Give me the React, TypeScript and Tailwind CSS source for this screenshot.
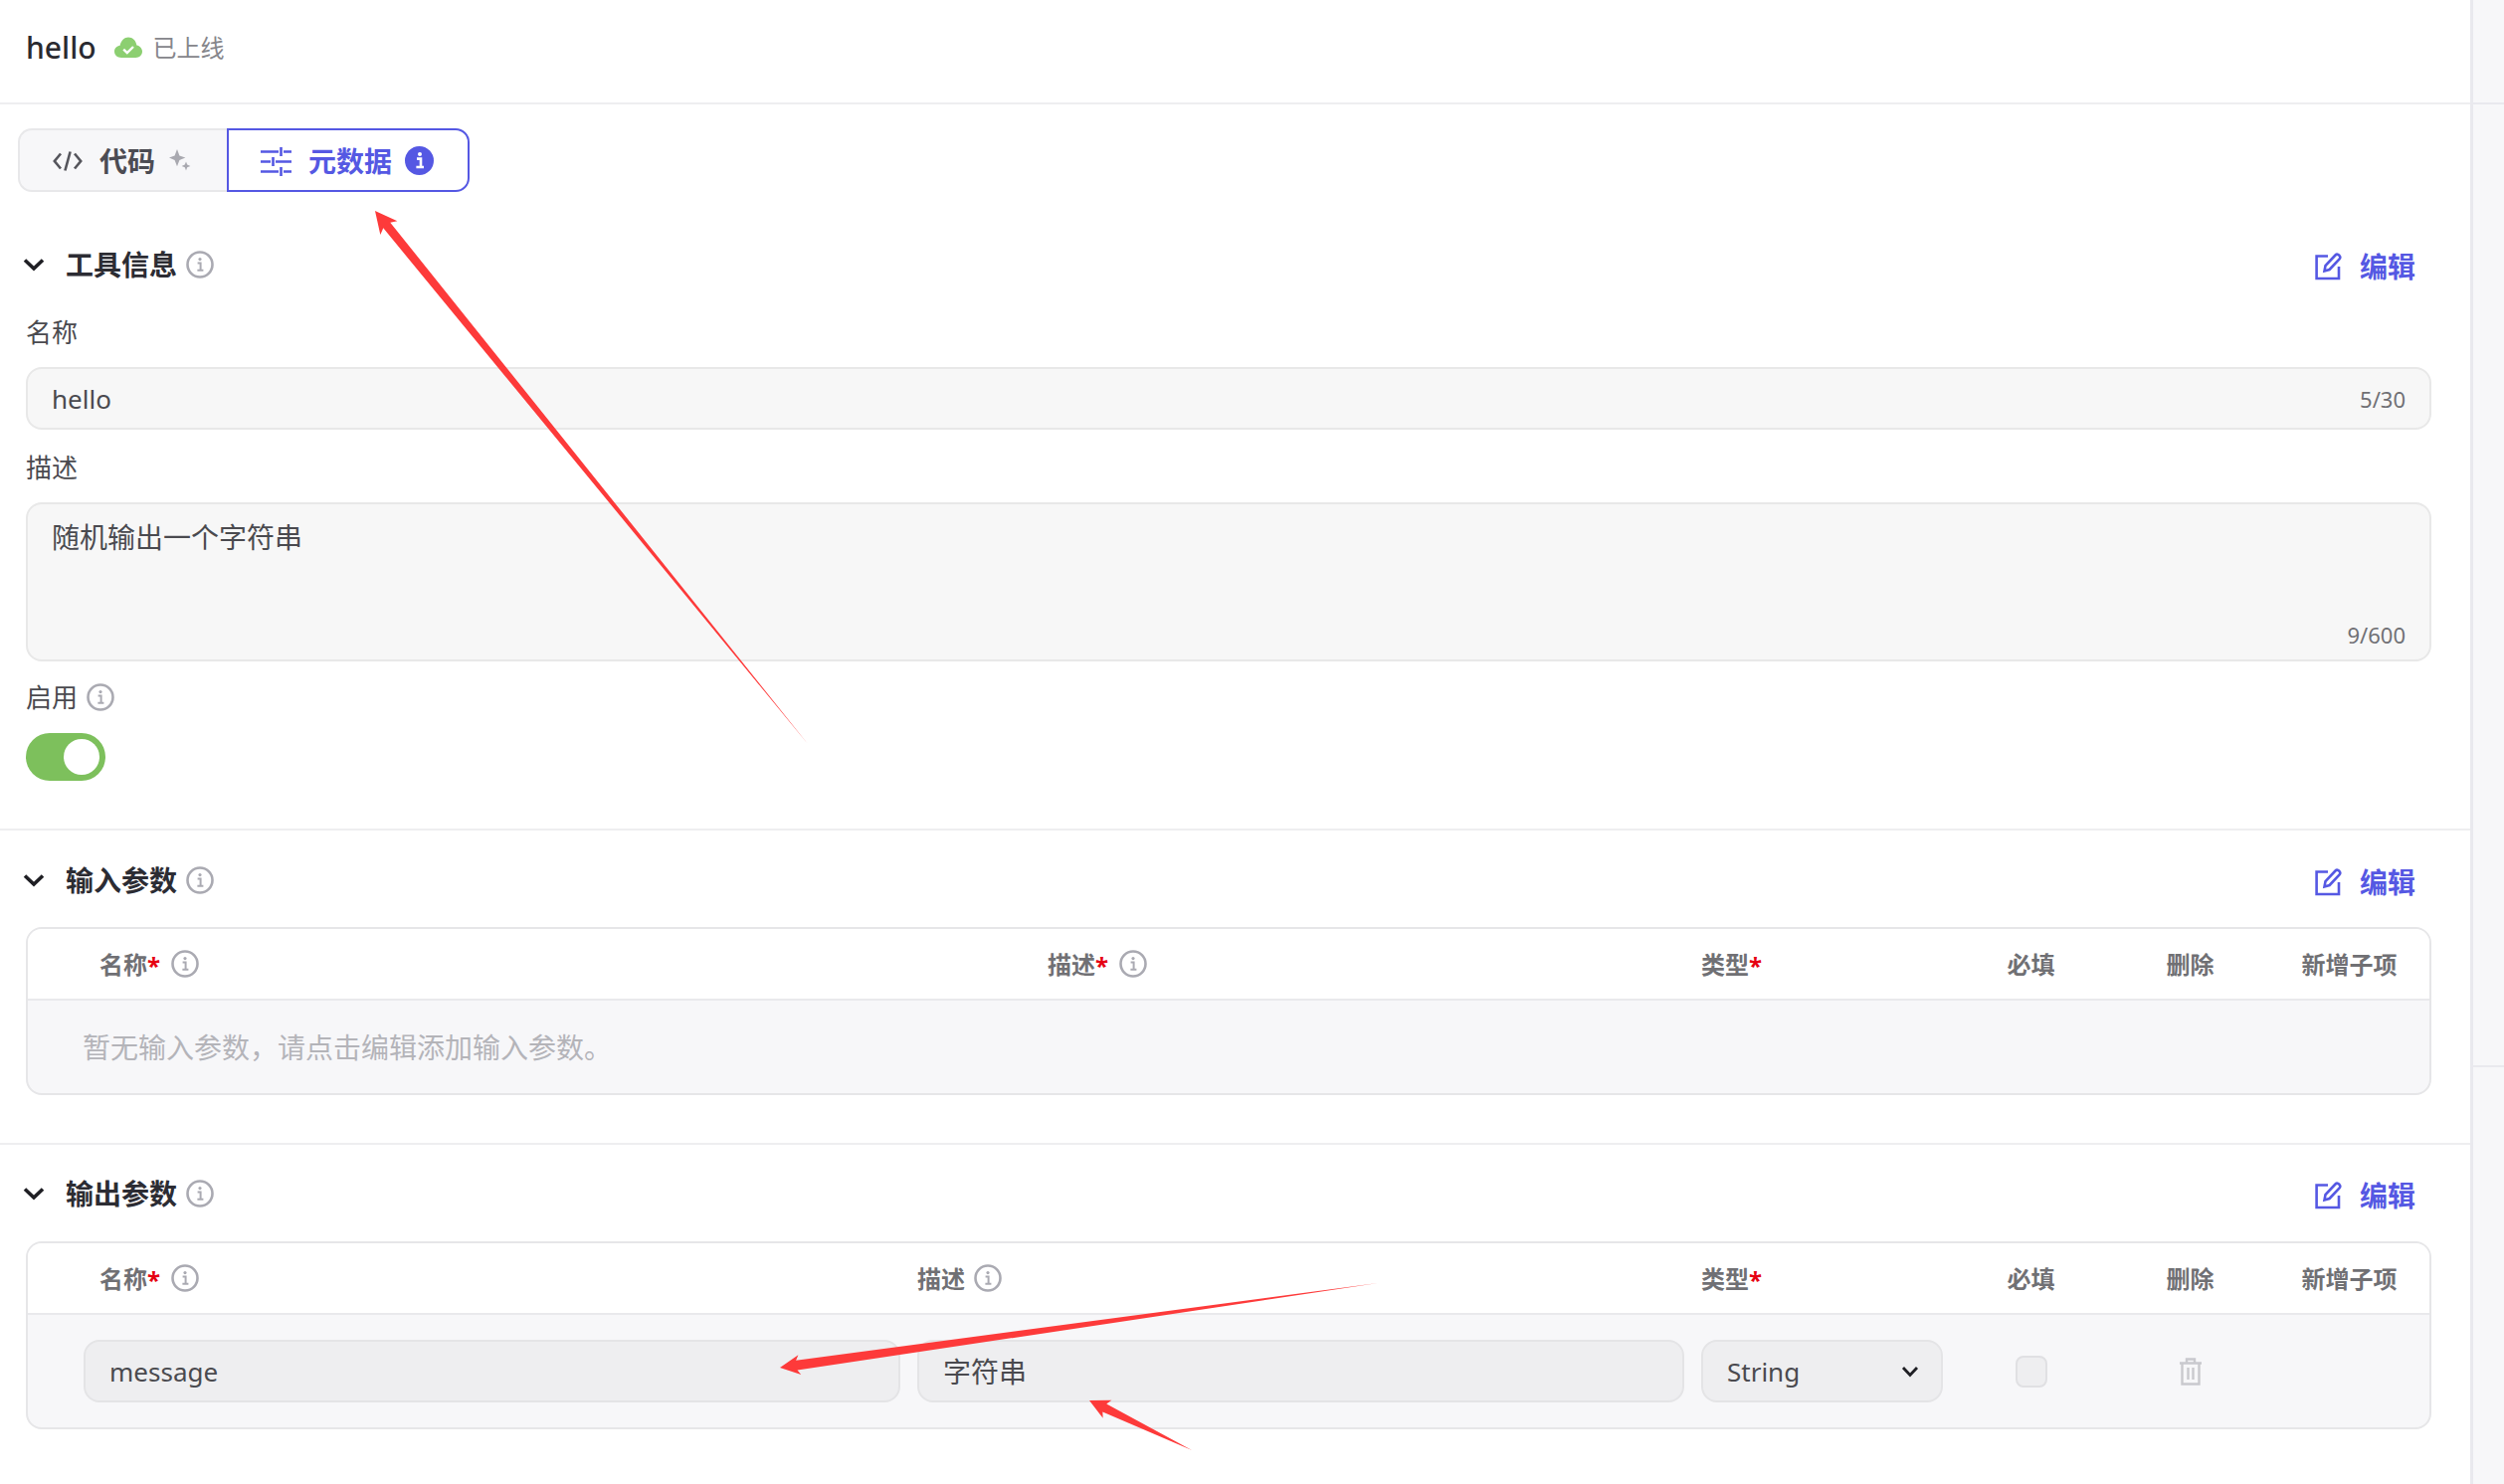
import React from 'react'

const GRID_INPUT = 'grid-cols-[952px_640px_243px_143px_143px_143px]'
const GRID_OUTPUT = 'grid-cols-[821px_771px_243px_143px_143px_143px]'

const InfoIcon = ({ className = 'w-[28px] h-[28px]' }: { className?: string }) => (
  <svg viewBox="0 0 28 28" className={className} fill="none">
    <circle cx="14" cy="14" r="12.5" stroke="#aaaab2" strokeWidth="2.6" />
    <circle cx="14" cy="8.6" r="1.6" fill="#aaaab2" />
    <path d="M11.6 12.4H14.6V19.4M11.4 19.8H17.4" stroke="#aaaab2" strokeWidth="2" />
  </svg>
)

const Chevron = () => (
  <svg viewBox="0 0 22 14" className="w-[22px] h-[14px]" fill="none">
    <path d="M2 2.5L11 11L20 2.5" stroke="#1f1f24" strokeWidth="3.6" />
  </svg>
)

const EditIcon = () => (
  <svg viewBox="0 0 27 28" className="w-[27px] h-[28px]" fill="none" stroke="#5558e3" strokeWidth="2.6">
    <path d="M13 3.5H1.6V26H24V14" />
    <path d="M9.5 18.5L10.5 13L20.5 2.5C21.5 1.5 23 1.5 24.4 2.8C25.6 4 25.6 5.4 24.6 6.4L14.6 17Z" />
  </svg>
)

const SectionHeader = ({ title }: { title: string }) => (
  <div className="h-[56px] pl-[23px] pr-[55px] flex items-center">
    <Chevron />
    <span className="ml-[21px] text-[28px] font-bold text-[#2c2c33]">{title}</span>
    <span className="ml-[9px] flex"><InfoIcon /></span>
    <div className="ml-auto mt-[3px] flex items-center gap-[18px]">
      <EditIcon />
      <span className="text-[28px] font-bold text-[#5558e3]">编辑</span>
    </div>
  </div>
)

const FieldLabel = ({ children }: { children: React.ReactNode }) => (
  <div className="h-[40px] pl-[26px] flex items-center gap-[9px] text-[26px] text-[#4a4a4f]">{children}</div>
)

const HeadCell = ({ label, required, info, className = '' }: { label: string; required?: boolean; info?: boolean; className?: string }) => (
  <div className={`flex items-center pt-[2px] text-[24px] font-bold text-[#707074] ${className}`}>
    <span>{label}</span>
    {required && <span className="text-[#e60012] self-start mt-[23px] mr-[2px] leading-[24px]">*</span>}
    {info && <span className="ml-[9px] -mt-[2px] flex"><InfoIcon /></span>}
  </div>
)

const TableHead = ({ grid, descRequired }: { grid: string; descRequired?: boolean }) => (
  <div className={`grid ${grid} gap-x-[17px] h-[72px] pl-[56px] border-b-2 border-[#e9e9ec] bg-white`}>
    <HeadCell label="名称" required info className="pl-[16px]" />
    <HeadCell label="描述" required={descRequired} info />
    <HeadCell label="类型" required />
    <HeadCell label="必填" className="justify-center" />
    <HeadCell label="删除" className="justify-center" />
    <HeadCell label="新增子项" className="justify-center whitespace-nowrap" />
  </div>
)

const Arrow = ({ tip, tail, width, head }: { tip: number[]; tail: number[]; width: number; head: number }) => {
  const dx = tail[0] - tip[0]
  const dy = tail[1] - tip[1]
  const len = Math.hypot(dx, dy)
  const ux = dx / len
  const uy = dy / len
  const at = (along: number, side: number) => `${tip[0] + ux * along - uy * side},${tip[1] + uy * along + ux * side}`
  const points = [
    at(0, 0),
    at(head, head * 0.5),
    at(head * 0.85, width / 2),
    `${tail[0]},${tail[1]}`,
    at(head * 0.85, -width / 2),
    at(head, -head * 0.5),
  ].join(' ')
  return <polygon points={points} fill="#fd3a3a" />
}

export default function App() {
  return (
    <div className="relative w-[2517px] h-[1492px] overflow-hidden flex bg-white font-['Noto_Sans','Noto_Sans_CJK_SC',sans-serif]">
      <main className="w-[2486px] shrink-0 border-r-[3px] border-[#e9e9ee]">
        <header className="h-[105px] border-b-2 border-[#eeeef0] pl-[26px] flex items-center gap-[18px] pb-[8px]">
          <span className="text-[30px] font-medium text-[#2a2a30]">hello</span>
          <div className="flex items-center gap-[11px]">
            <svg viewBox="0 0 28 24" className="w-[28px] h-[24px]">
              <path d="M7 22C3 22 0 19.3 0 15.8C0 12.6 2.4 10.2 5.6 9.8C6.6 4.6 10 1.4 14 1.4C18.4 1.4 21.6 4.4 22.4 9.4C25.6 10 28 12.6 28 15.8C28 19.4 25 22 21.4 22Z" fill="#8ccf71" />
              <path d="M9.2 13.6L12.8 17L19 11" fill="none" stroke="#fff" strokeWidth="2.4" />
            </svg>
            <span className="text-[24px] text-[#86868b]">已上线</span>
          </div>
        </header>

        <div className="mt-[24px] ml-[18px] flex h-[64px] w-[454px]">
          <div className="w-[210px] rounded-l-[14px] border-2 border-r-0 border-[#e8e8ea] bg-[#f7f7f9] flex items-center pl-[33px]">
            <svg viewBox="0 0 30 22" className="w-[30px] h-[22px] mt-[2px]" fill="none" stroke="#55555c" strokeWidth="2.6">
              <path d="M8 3.5L1.8 11L8 18.5M22 3.5L28.2 11L22 18.5M17.6 1.5L12.4 20.5" />
            </svg>
            <span className="ml-[17px] mt-[2px] text-[28px] font-bold text-[#4c4c53]">代码</span>
            <svg viewBox="0 0 22 22" className="ml-[14px] w-[22px] h-[22px]" fill="#a9a9b0">
              <path d="M8 0L10.4 6.4L16.4 8.6L10.4 11L8 17.2L5.6 11L0 8.6L5.6 6.4Z" />
              <path d="M17 12.5L18.2 15.6L21.4 17L18.2 18.3L17 21.5L15.8 18.3L12.6 17L15.8 15.6Z" />
            </svg>
          </div>
          <div className="flex-1 rounded-r-[14px] border-2 border-[#5558e3] bg-white flex items-center pl-[32px]">
            <svg viewBox="0 0 32 30" className="w-[32px] h-[30px] mt-[2px]" fill="none" stroke="#5558e3" strokeWidth="2.6">
              <path d="M0 5.5H18M23 5.5H31M20.5 1V10" />
              <path d="M0 15.5H10M15 15.5H31M12.5 11V20" />
              <path d="M0 25.5H18M23 25.5H31M20.5 21V30" />
            </svg>
            <span className="ml-[16px] mt-[2px] text-[28px] font-bold text-[#5558e3]">元数据</span>
            <span className="ml-[13px] w-[29px] h-[29px] rounded-full bg-[#5558e3] flex items-center justify-center">
              <svg viewBox="0 0 14 18" className="w-[14px] h-[18px]" fill="none">
                <circle cx="7" cy="3" r="2" fill="#fff" />
                <path d="M4 7.6H8V15.6M3.4 16H11" stroke="#fff" strokeWidth="2.6" />
              </svg>
            </span>
          </div>
        </div>

        <section className="mt-[45px]">
          <SectionHeader title="工具信息" />
          <div className="mt-[20px]"><FieldLabel>名称</FieldLabel></div>
          <div className="mt-[15px] ml-[26px] w-[2418px] h-[63px] rounded-[16px] border-2 border-[#e8e8e8] bg-[#f7f7f7] pl-[24px] pr-[24px] pt-[2px] flex items-center justify-between">
            <span className="text-[26px] text-[#4a4a4f]">hello</span>
            <span className="text-[22px] text-[#707074]">5/30</span>
          </div>
          <div className="mt-[18px]"><FieldLabel>描述</FieldLabel></div>
          <div className="mt-[15px] ml-[26px] w-[2418px] h-[160px] rounded-[16px] border-2 border-[#e8e8e8] bg-[#f7f7f7] pl-[24px] pr-[24px] pt-[13px] flex flex-col">
            <span className="text-[28px] leading-[40px] text-[#4a4a4f]">随机输出一个字符串</span>
            <span className="mt-auto mb-[10px] self-end text-[22px] leading-[30px] text-[#707074]">9/600</span>
          </div>
          <div className="mt-[16px]">
            <FieldLabel>启用<InfoIcon /></FieldLabel>
          </div>
          <div className="mt-[16px] ml-[26px] w-[80px] h-[48px] rounded-full bg-[#7dc05c] flex items-center justify-end pr-[6px]">
            <span className="w-[36px] h-[36px] rounded-full bg-white" />
          </div>
        </section>

        <section className="mt-[48px] border-t-2 border-[#eeeef0] pt-[22px]">
          <SectionHeader title="输入参数" />
          <div className="mt-[19px] ml-[26px] w-[2418px] h-[169px] rounded-[16px] border-2 border-[#e6e6e8] overflow-hidden bg-[#f7f7f9]">
            <TableHead grid={GRID_INPUT} descRequired />
            <div className="h-[93px] pl-[55px] flex items-center text-[28px] text-[#b4b4b9]">暂无输入参数，请点击编辑添加输入参数。</div>
          </div>
        </section>

        <section className="mt-[48px] border-t-2 border-[#eeeef0] pt-[21px]">
          <SectionHeader title="输出参数" />
          <div className="mt-[20px] ml-[26px] w-[2418px] h-[189px] rounded-[16px] border-2 border-[#e6e6e8] overflow-hidden bg-[#f7f7f9]">
            <TableHead grid={GRID_OUTPUT} />
            <div className={`grid ${GRID_OUTPUT} gap-x-[17px] pl-[56px] pt-[25px]`}>
              <div className="h-[63px] rounded-[16px] border-2 border-[#e4e4e6] bg-[#eeeef0] pl-[24px] pt-[2px] flex items-center text-[26px] text-[#4a4a4f]">message</div>
              <div className="h-[63px] rounded-[16px] border-2 border-[#e4e4e6] bg-[#eeeef0] pl-[24px] flex items-center text-[28px] text-[#4a4a4f]">字符串</div>
              <div className="h-[63px] rounded-[16px] border-2 border-[#e4e4e6] bg-[#eeeef0] pl-[24px] pr-[22px] pt-[2px] flex items-center justify-between text-[26px] text-[#4a4a4f]">
                <span>String</span>
                <svg viewBox="0 0 18 12" className="w-[18px] h-[12px] -mt-[2px]" fill="none">
                  <path d="M2 2L9 9.5L16 2" stroke="#1f1f24" strokeWidth="2.8" />
                </svg>
              </div>
              <div className="flex items-center justify-center">
                <span className="w-[32px] h-[32px] rounded-[8px] border-2 border-[#e0e0e3] bg-[#eeeef0]" />
              </div>
              <div className="flex items-center justify-center">
                <svg viewBox="0 0 24 28" className="w-[24px] h-[28px]" fill="none" stroke="#c9c9ce" strokeWidth="2.4">
                  <path d="M1 5.5H23M8 5.5V1.5H16V5.5M3.5 5.5V26.5H20.5V5.5M9.5 10V22M14.5 10V22" />
                </svg>
              </div>
              <div />
            </div>
          </div>
        </section>
      </main>

      <aside className="flex-1 bg-[#f7f7f9]">
        <div className="h-[105px] border-b-2 border-[#e9e9ee]" />
        <div className="h-[968px] border-b-2 border-[#e9e9ee]" />
      </aside>

      <svg viewBox="0 0 2517 1492" className="absolute inset-0 w-[2517px] h-[1492px] pointer-events-none">
        <Arrow tip={[377, 212]} tail={[812, 748]} width={9} head={22} />
        <Arrow tip={[784, 1375]} tail={[1385, 1290]} width={10} head={20} />
        <Arrow tip={[1095, 1408]} tail={[1198, 1458]} width={9} head={20} />
      </svg>
    </div>
  )
}
